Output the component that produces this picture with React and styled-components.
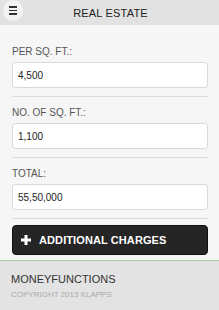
import React from "react";
import styled, { createGlobalStyle } from "styled-components";

const Global = createGlobalStyle`
  html, body { margin: 0; padding: 0; background: #f6f6f6; }
  body { font-family: "Liberation Sans", Arial, sans-serif; }
  * { box-sizing: border-box; }
`;

const Page = styled.div`
  width: 219px;
  height: 310px;
  display: flex;
  flex-direction: column;
  background: #f6f6f6;
  overflow: hidden;
`;

const Header = styled.div`
  height: 25px;
  flex: none;
  background: #e2e2e2;
  display: flex;
  align-items: center;
  position: relative;
  justify-content: center;
`;

const MenuButton = styled.div`
  position: absolute;
  left: 3px;
  top: 0;
  width: 20px;
  height: 21px;
  border-radius: 50%;
  background: #f3f3f3;
  display: flex;
  flex-direction: column;
  align-items: center;
  justify-content: center;
  gap: 2px;
`;

const MenuLine = styled.span`
  display: block;
  width: 8px;
  height: 1.5px;
  background: #333;
`;

const Title = styled.div`
  font-size: 11px;
  color: #222;
  letter-spacing: 0.2px;
  margin-left: 2px;
`;

const Content = styled.div`
  flex: 1;
  padding: 21px 11px 0 12px;
  display: flex;
  flex-direction: column;
`;

const Field = styled.div`
  display: flex;
  flex-direction: column;
  padding-bottom: 8px;
  border-bottom: 1px solid #dcdcdc;
  margin-bottom: ${(p) => (p.$last ? "6px" : "10px")};
`;

const Label = styled.div`
  font-size: 10px;
  line-height: 12px;
  color: #555;
  margin-bottom: 4px;
`;

const Input = styled.div`
  height: 26px;
  background: #fff;
  border: 1px solid #dadada;
  border-radius: 3px;
  display: flex;
  align-items: center;
  padding-left: 5px;
  font-size: 10px;
  color: #222;
`;

const Button = styled.div`
  height: 30px;
  background: #252525;
  border: 1px solid #111;
  border-radius: 4px;
  display: flex;
  align-items: center;
  padding-left: 8px;
  gap: 8px;
  color: #fff;
  font-weight: bold;
  font-size: 11px;
  letter-spacing: 0.1px;
`;

const Footer = styled.div`
  flex: none;
  height: 50px;
  background: #e3e3e3;
  border-top: 1px solid #9fd49f;
  padding: 12px 11px 0 11px;
`;

const Brand = styled.div`
  font-size: 11px;
  color: #333;
  line-height: 13px;
`;

const Copy = styled.div`
  font-size: 8px;
  color: #aaa;
  margin-top: 4px;
`;

const Plus = () => (
  <svg width="10" height="10" viewBox="0 0 10 10">
    <rect x="3.5" y="0" width="3" height="10" fill="#fff" />
    <rect x="0" y="3.5" width="10" height="3" fill="#fff" />
  </svg>
);

const fields = [
  { label: "PER SQ. FT.:", value: "4,500" },
  { label: "NO. OF SQ. FT.:", value: "1,100" },
  { label: "TOTAL:", value: "55,50,000" },
];

export default function App() {
  return (
    <>
      <Global />
      <Page>
        <Header>
          <MenuButton>
            <MenuLine />
            <MenuLine />
            <MenuLine />
          </MenuButton>
          <Title>REAL ESTATE</Title>
        </Header>
        <Content>
          {fields.map((f, i) => (
            <Field key={f.label} $last={i === fields.length - 1}>
              <Label>{f.label}</Label>
              <Input>{f.value}</Input>
            </Field>
          ))}
          <Button>
            <Plus />
            ADDITIONAL CHARGES
          </Button>
        </Content>
        <Footer>
          <Brand>MONEYFUNCTIONS</Brand>
          <Copy>COPYRIGHT 2013 KLAPPS</Copy>
        </Footer>
      </Page>
    </>
  );
}
